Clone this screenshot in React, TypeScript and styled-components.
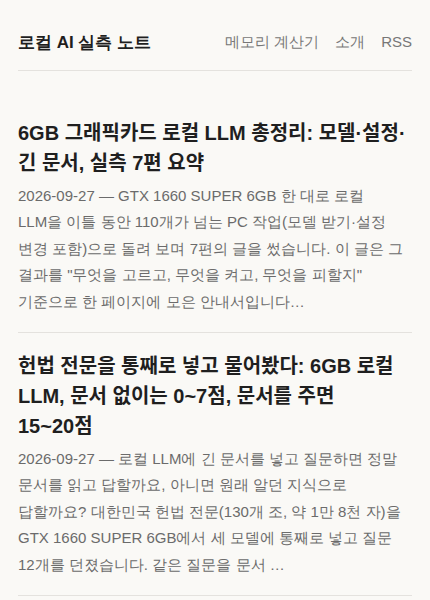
import styled, { createGlobalStyle } from "styled-components";

const posts = [
  {
    title: "6GB 그래픽카드 로컬 LLM 총정리: 모델·설정·긴 문서, 실측 7편 요약",
    date: "2026-09-27",
    summary:
      'GTX 1660 SUPER 6GB 한 대로 로컬 LLM을 이틀 동안 110개가 넘는 PC 작업(모델 받기·설정 변경 포함)으로 돌려 보며 7편의 글을 썼습니다. 이 글은 그 결과를 "무엇을 고르고, 무엇을 켜고, 무엇을 피할지" 기준으로 한 페이지에 모은 안내서입니다…',
  },
  {
    title: "헌법 전문을 통째로 넣고 물어봤다: 6GB 로컬 LLM, 문서 없이는 0~7점, 문서를 주면 15~20점",
    date: "2026-09-27",
    summary:
      "로컬 LLM에 긴 문서를 넣고 질문하면 정말 문서를 읽고 답할까요, 아니면 원래 알던 지식으로 답할까요? 대한민국 헌법 전문(130개 조, 약 1만 8천 자)을 GTX 1660 SUPER 6GB에서 세 모델에 통째로 넣고 질문 12개를 던졌습니다. 같은 질문을 문서 …",
  },
];

const GlobalStyle = createGlobalStyle`
  html, body {
    margin: 0;
    padding: 0;
    background: #faf9f6;
  }
  body {
    font-family: "Liberation Sans", sans-serif;
    color: #1f1f1f;
    word-break: keep-all;
  }
`;

const Page = styled.div`
  padding: 0 18px;
`;

const Header = styled.header`
  display: flex;
  align-items: center;
  justify-content: space-between;
  padding: 31px 0 16px;
  border-bottom: 1px solid #e4e2de;
`;

const SiteTitle = styled.a`
  font-size: 17px;
  font-weight: 700;
  color: #1f1f1f;
  text-decoration: none;
`;

const Nav = styled.nav`
  display: flex;
  gap: 16px;
`;

const NavLink = styled.a`
  font-size: 15px;
  color: #777;
  text-decoration: none;
`;

const Main = styled.main`
  padding-top: 29px;
`;

const Article = styled.article`
  padding: 18px 0 17px;
  border-bottom: 1px solid #e4e2de;
`;

const Title = styled.h2`
  margin: 0 0 5px;
  font-family: "Liberation Sans", "Noto Sans CJK KR", sans-serif;
  font-size: 20px;
  line-height: 30px;
  font-weight: 700;
  color: #1f1f1f;
`;

const Summary = styled.p`
  margin: 0;
  font-size: 15px;
  line-height: 26.4px;
  color: #6b6b6b;
`;

export default function App() {
  return (
    <>
      <GlobalStyle />
      <Page>
        <Header>
          <SiteTitle href="#">로컬 AI 실측 노트</SiteTitle>
          <Nav>
            <NavLink href="#">메모리 계산기</NavLink>
            <NavLink href="#">소개</NavLink>
            <NavLink href="#">RSS</NavLink>
          </Nav>
        </Header>
        <Main>
          {posts.map((p) => (
            <Article key={p.title}>
              <Title>{p.title}</Title>
              <Summary>
                {p.date} — {p.summary}
              </Summary>
            </Article>
          ))}
        </Main>
      </Page>
    </>
  );
}
